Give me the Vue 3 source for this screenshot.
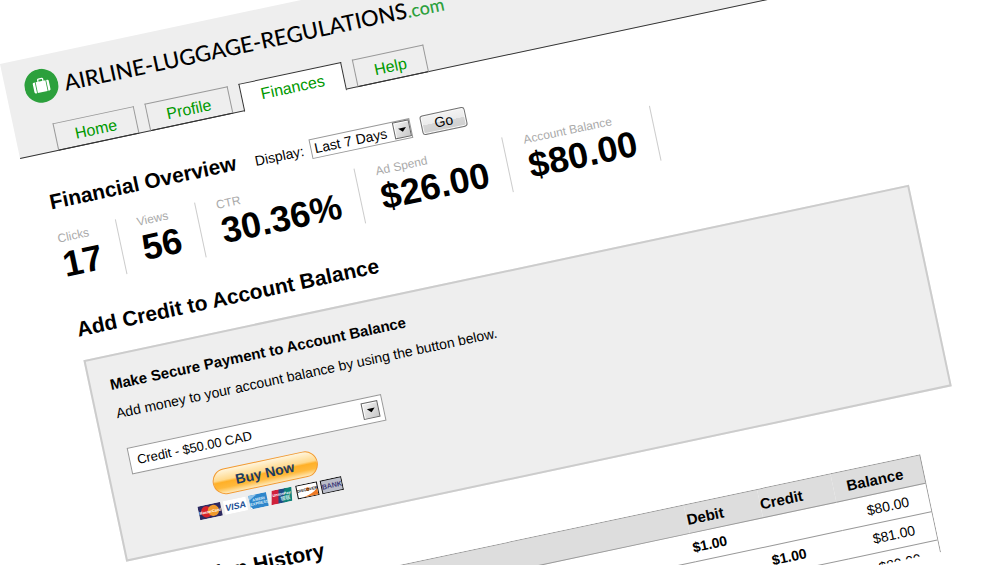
<script setup>
import { ref } from 'vue'

const tabs = ['Home', 'Profile', 'Finances', 'Help']
const activeTab = ref('Finances')

const range = ref('Last 7 Days')
const credit = ref('Credit - $50.00 CAD')

const stats = [
  { label: 'Clicks', value: '17' },
  { label: 'Views', value: '56' },
  { label: 'CTR', value: '30.36%' },
  { label: 'Ad Spend', value: '$26.00' },
  { label: 'Account Balance', value: '$80.00' },
]

const rows = [
  { debit: '$1.00', credit: '', balance: '$80.00' },
  { debit: '', credit: '$1.00', balance: '$81.00' },
  { debit: '', credit: '', balance: '$80.00' },
]
</script>

<template>
  <div class="stage">
    <div class="page">
      <header class="header">
        <div class="brand">
          <svg class="brand__mark" viewBox="0 0 34 34" aria-hidden="true">
            <circle cx="17" cy="17" r="17" fill="#2ca03c" />
            <path d="M14.5 12.5v-2q0-.8.8-.8h3.4q.8 0 .8.8v2" fill="none" stroke="#fff" stroke-width="1.3" />
            <path d="M12 12.3h10v11H12z" fill="#fff" />
            <path d="M11.2 12.3v11h-1q-1.4 0-1.4-1.4v-8.2q0-1.4 1.4-1.4zM22.8 12.3v11h1q1.4 0 1.4-1.4v-8.2q0-1.4-1.4-1.4z" fill="#fff" />
          </svg>
          <span class="brand__name">AIRLINE-LUGGAGE-REGULATIONS<span class="brand__tld">.com</span></span>
        </div>
        <nav class="tabs">
          <a
            v-for="tab in tabs"
            :key="tab"
            href="#"
            class="tab"
            :class="{ 'tab--on': activeTab === tab }"
            @click.prevent="activeTab = tab"
          >{{ tab }}</a>
        </nav>
      </header>

      <main class="main">
        <div class="overview">
          <h2 class="title">Financial Overview</h2>
          <form class="filter" @submit.prevent>
            <label for="range" class="filter__label">Display:</label>
            <span class="pick pick--range">
              <select id="range" v-model="range" class="pick__field">
                <option>Last 7 Days</option>
              </select>
              <span class="pick__arrow"></span>
            </span>
            <button type="submit" class="go">Go</button>
          </form>
        </div>

        <dl class="stats">
          <div v-for="stat in stats" :key="stat.label" class="stat">
            <dt class="stat__label">{{ stat.label }}</dt>
            <dd class="stat__value">{{ stat.value }}</dd>
          </div>
        </dl>

        <h2 class="title title--credit">Add Credit to Account Balance</h2>
        <section class="box">
          <h3 id="pay-title" class="box__title">Make Secure Payment to Account Balance</h3>
          <p class="box__text">Add money to your account balance by using the button below.</p>
          <form class="pay" @submit.prevent>
            <span class="pick pick--credit">
              <select v-model="credit" class="pick__field" aria-labelledby="pay-title">
                <option>Credit - $50.00 CAD</option>
              </select>
              <span class="pick__arrow"></span>
            </span>
            <button type="submit" class="buy">Buy Now</button>
            <svg class="cards" viewBox="0 0 147 14" aria-hidden="true">
              <rect width="23" height="14" fill="#2d2a62" />
              <circle cx="8" cy="7" r="5.6" fill="#d8222a" />
              <circle cx="15" cy="7" r="5.6" fill="#f09a2c" />
              <text x="11.5" y="8.7" font-size="4" font-style="italic" text-anchor="middle" fill="#fff">MasterCard</text>

              <rect x="26" width="23" height="14" fill="#fff" />
              <text x="37.5" y="10.4" font-size="9" font-style="italic" text-anchor="middle" fill="#1c4f94">VISA</text>

              <rect x="52" width="18" height="14" fill="#2f86cb" />
              <path d="M52 0h9l-9 5z" fill="#8fc3ea" />
              <path d="M52 11l2 3h-2z" fill="#fff" />
              <text x="61.5" y="6.6" font-size="4" text-anchor="middle" fill="#d8ecfa">AMERI</text>
              <text x="61.5" y="10.6" font-size="4" text-anchor="middle" fill="#d8ecfa">EXPRESS</text>

              <path d="M76 0h8l-3 14h-8z" fill="#d0213b" />
              <path d="M83 0h8l-3 14h-8z" fill="#1f4b86" />
              <path d="M89 0h7l-2 14h-9z" fill="#0e8178" />
              <text x="85" y="6.4" font-size="4" font-style="italic" text-anchor="middle" fill="#fff">UnionPay</text>
              <text x="88" y="11.6" font-size="5" text-anchor="middle" fill="#bfe4e0">银联</text>

              <rect x="100.5" y=".5" width="21" height="13" fill="#fff" stroke="#111" />
              <path d="M121 6.5v6.5h-15q10-1.5 15-6.5z" fill="#ee7a25" />
              <circle cx="111.5" cy="5.8" r="1.9" fill="#ee7a25" />
              <text x="111" y="7.4" font-size="4" text-anchor="middle" fill="#111">DISCOVER</text>

              <rect x="125.5" y=".5" width="21" height="13" fill="#b9bcc8" stroke="#111" />
              <text x="136" y="9.4" font-size="7" text-anchor="middle" fill="#3b3a78">BANK</text>
            </svg>
          </form>
        </section>

        <h2 class="title title--history">Transaction History</h2>
        <div class="history">
          <table class="table">
            <thead>
              <tr>
                <td></td>
                <th class="col" scope="col">Debit</th>
                <th class="col" scope="col">Credit</th>
                <th class="col--balance" scope="col">Balance</th>
              </tr>
            </thead>
            <tbody>
              <tr v-for="(row, i) in rows" :key="i">
                <td></td>
                <td class="amount">{{ row.debit }}</td>
                <td class="amount">{{ row.credit }}</td>
                <td class="col--balance">{{ row.balance }}</td>
              </tr>
            </tbody>
          </table>
        </div>
      </main>
    </div>
  </div>
</template>

<style>
body {
  margin: 0;
  background: #fff;
}
</style>

<style scoped>
.stage {
  height: 100vh;
  overflow: hidden;
  font-family: 'Liberation Sans', Arial, sans-serif;
  font-size: 14px;
  color: #000;
}

.stage::before {
  content: '';
  display: table;
}

/* the whole page is laid on a slant, turning on its top left corner */
.page {
  max-width: 884px;
  margin-top: 64px;
  transform: rotate(-12deg);
  transform-origin: 0 0;
}

.header {
  background: #eee;
  border-bottom: 1px solid #333;
  padding: 13px 20px 0 19px;
}

.brand {
  display: flex;
  align-items: center;
  gap: 6px;
  height: 34px;
}

.brand__mark {
  width: 34px;
  height: 34px;
}

.brand__name {
  padding-top: 4px;
  font-family: Lato, 'Liberation Sans', sans-serif;
  font-size: 22px;
  font-weight: 500;
  line-height: 34px;
  white-space: nowrap;
}

.brand__tld {
  font-size: 18px;
  color: #2ca03c;
}

.tabs {
  display: flex;
  gap: 11px;
  margin: 22px 0 -1px 20px;
}

.tab {
  padding: 2px 19px 0;
  border: 1px solid #999;
  border-bottom-color: #333;
  font-size: 16px;
  line-height: 24px;
  color: #090;
  text-decoration: none;
}

.tab--on {
  margin-bottom: -1px;
  padding-bottom: 1px;
  background: #fff;
  border-color: #333;
  border-bottom-color: #fff;
}

.main {
  padding: 37px 20px 0;
}

.overview,
.filter {
  display: flex;
  align-items: baseline;
}

.overview {
  gap: 19px;
}

.title {
  margin: 0;
  font-size: 21px;
  line-height: 24px;
}

.filter__label {
  margin-right: 7px;
}

.pick {
  position: relative;
  display: inline-block;
}

.pick__field {
  appearance: none;
  box-sizing: border-box;
  width: 100%;
  margin: 0;
  border: 1px solid #999;
  border-radius: 0;
  background: #fff;
  color: #000;
  font-family: inherit;
}

.pick--range {
  width: 103px;
  margin-right: 10px;
}

.pick--range .pick__field {
  height: 20px;
  padding: 0 0 0 3px;
  font-size: 14px;
}

.pick--credit {
  width: 260px;
}

.pick--credit .pick__field {
  display: block;
  height: 27px;
  padding: 0 0 0 7px;
  font-size: 13px;
}

.pick__arrow {
  position: absolute;
  top: 1px;
  right: 1px;
  box-sizing: border-box;
  width: 17px;
  height: 17px;
  border: 1px solid #666;
  background: linear-gradient(135deg, #f4f4f4, #c8c8c8);
  box-shadow: inset 1px 1px 0 #fff;
  pointer-events: none;
}

.pick--credit .pick__arrow {
  top: 5px;
  right: 5px;
}

.pick__arrow::after {
  content: '';
  position: absolute;
  top: 6px;
  left: 4px;
  border: 4px solid transparent;
  border-top-color: #000;
  border-bottom: 0;
}

.go {
  width: 46px;
  height: 20px;
  padding: 0;
  border: 1px solid #707070;
  border-radius: 3px;
  background: linear-gradient(#f3f3f3 0%, #ebebeb 50%, #d6d6d6 51%, #cfcfcf 100%);
  box-shadow: inset 0 0 0 1px #fafafa;
  color: #000;
  font-family: inherit;
  font-size: 14px;
  line-height: 18px;
}

.stats {
  display: flex;
  gap: 20px;
  margin: 18px 0 0;
}

.stat {
  padding: 0 20px 3px 0;
  border-right: 1px solid #ccc;
}

.stat__label {
  font-size: 12px;
  line-height: 15px;
  color: #aaa;
  width: 0;
  white-space: nowrap;
}

.stat__value {
  margin: 0;
  font-size: 36px;
  font-weight: 700;
  line-height: 38px;
}

.title--credit {
  margin: 32px 0 19px;
}

.box {
  padding: 18px 19px 23px;
  border: 2px solid #ccc;
  background: #eee;
}

.box__title {
  margin: 0;
  font-size: 15px;
  line-height: 20px;
}

.box__text {
  margin: 9px 0 26px;
  line-height: 20px;
}

.pay {
  display: flex;
  flex-direction: column;
  align-items: center;
  width: 260px;
  margin-left: 3px;
}

.buy {
  width: 107px;
  height: 26px;
  margin: 13px 0 6px;
  padding: 0;
  border: 1px solid #f39a2e;
  border-radius: 13px;
  background: linear-gradient(#fff5dc 0%, #ffd98c 42%, #ffb028 52%, #ffb93c 75%, #ffe9b8 100%);
  color: #1c3b60;
  font-family: inherit;
  font-size: 14px;
  font-weight: 700;
  line-height: 24px;
}

.cards {
  display: block;
  width: 147px;
  height: 14px;
  font-weight: 700;
  font-family: 'Liberation Sans', 'Noto Sans CJK SC', sans-serif;
}

.title--history {
  margin: 18px 0 18px;
}

.history {
  height: 100px;
  margin-right: 45px;
  overflow: hidden;
}

.table {
  width: 100%;
  border: 1px solid #999;
  border-collapse: collapse;
  table-layout: fixed;
}

.table th,
.table td {
  height: 28px;
  padding: 0;
  border-bottom: 1px solid #999;
  text-align: left;
}

.table thead {
  background: #ddd;
  font-size: 15px;
}

.table .col {
  width: 75px;
}

.table .amount {
  font-weight: 700;
}

.table .col--balance {
  width: 71px;
  padding-right: 20px;
  text-align: right;
}
</style>
